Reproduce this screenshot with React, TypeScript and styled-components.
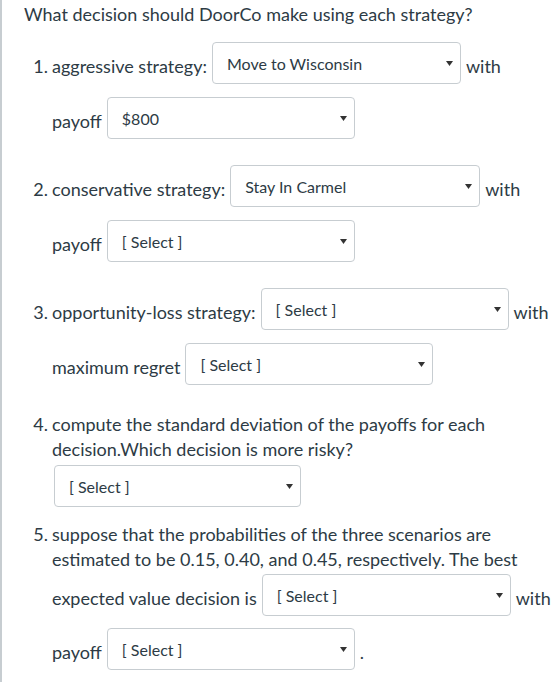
import styled, { createGlobalStyle } from "styled-components";

const GlobalStyle = createGlobalStyle`
  html, body {
    margin: 0;
    padding: 0;
    background: #fff;
  }
  body {
    font-family: Lato, "Open Sans", sans-serif;
    color: #2d3b45;
  }
`;

const Page = styled.div`
  min-height: 100vh;
  box-sizing: border-box;
  border-left: 2px solid #c7cdd1;
  padding: 2px 0 0 22px;
  font-size: 18px;
  line-height: 25px;
`;

const Question = styled.p`
  margin: 0;
`;

const Items = styled.ol`
  list-style: none;
  margin: 15px 0 0;
  padding: 0 0 0 28px;
`;

const Item = styled.li<{ $top: number }>`
  margin-top: ${(p) => p.$top}px;
`;

const Line = styled.div<{ $top?: number }>`
  display: flex;
  align-items: center;
  gap: 5px;
  white-space: nowrap;
  margin-top: ${(p) => p.$top ?? 0}px;
`;

const TextLine = styled.div`
  height: 25px;
  white-space: nowrap;
`;

const Label = styled.span`
  padding-top: 6px;
`;

const Num = styled.span`
  display: inline-block;
  box-sizing: border-box;
  width: 28px;
  margin-left: -28px;
  padding-right: 4px;
  text-align: right;
`;

const SelectBox = styled.div<{ $width?: number; $indent?: number }>`
  flex: none;
  box-sizing: border-box;
  width: ${(p) => p.$width ?? 249}px;
  height: 42px;
  margin-left: ${(p) => p.$indent ?? 0}px;
  display: flex;
  align-items: center;
  justify-content: space-between;
  padding: 0 7px 0 14px;
  border: 1px solid #c7cdd1;
  border-radius: 4px;
  background: #fff;
  font-size: 16px;
  color: #2d3b45;
`;

const Caret = () => (
  <svg width="7" height="5" viewBox="0 0 7 5" aria-hidden="true">
    <path d="M0 0 H7 L3.5 5 Z" fill="#333" />
  </svg>
);

function Select({ value, width, indent }: { value?: string; width?: number; indent?: number }) {
  return (
    <SelectBox $width={width} $indent={indent}>
      <span>{value ?? "[ Select ]"}</span>
      <Caret />
    </SelectBox>
  );
}

export default function App() {
  return (
    <>
      <GlobalStyle />
      <Page>
        <Question>What decision should DoorCo make using each strategy?</Question>
        <Items>
          <Item $top={0}>
            <Line>
              <Label>
                <Num>1.</Num>aggressive strategy:
              </Label>
              <Select value="Move to Wisconsin" />
              <Label>with</Label>
            </Line>
            <Line $top={13}>
              <Label>payoff</Label>
              <Select value="$800" width={248} />
            </Line>
          </Item>

          <Item $top={26}>
            <Line>
              <Label>
                <Num>2.</Num>conservative strategy:
              </Label>
              <Select value="Stay In Carmel" width={250} />
              <Label>with</Label>
            </Line>
            <Line $top={13}>
              <Label>payoff</Label>
              <Select width={248} />
            </Line>
          </Item>

          <Item $top={26}>
            <Line>
              <Label>
                <Num>3.</Num>opportunity-loss strategy:
              </Label>
              <Select width={248} />
              <Label>with</Label>
            </Line>
            <Line $top={13}>
              <Label>maximum regret</Label>
              <Select width={248} />
            </Line>
          </Item>

          <Item $top={27}>
            <TextLine>
              <Num>4.</Num>compute the standard deviation of the payoffs for each
            </TextLine>
            <TextLine>decision.Which decision is more risky?</TextLine>
            <Line $top={3}>
              <Select width={247} indent={2} />
            </Line>
          </Item>

          <Item $top={15}>
            <TextLine>
              <Num>5.</Num>suppose that the probabilities of the three scenarios are
            </TextLine>
            <TextLine>estimated to be 0.15, 0.40, and 0.45, respectively. The best</TextLine>
            <Line $top={2}>
              <Label>expected value decision is</Label>
              <Select />
              <Label>with</Label>
            </Line>
            <Line $top={12}>
              <Label>payoff</Label>
              <Select width={248} />
              <Label>.</Label>
            </Line>
          </Item>
        </Items>
      </Page>
    </>
  );
}
